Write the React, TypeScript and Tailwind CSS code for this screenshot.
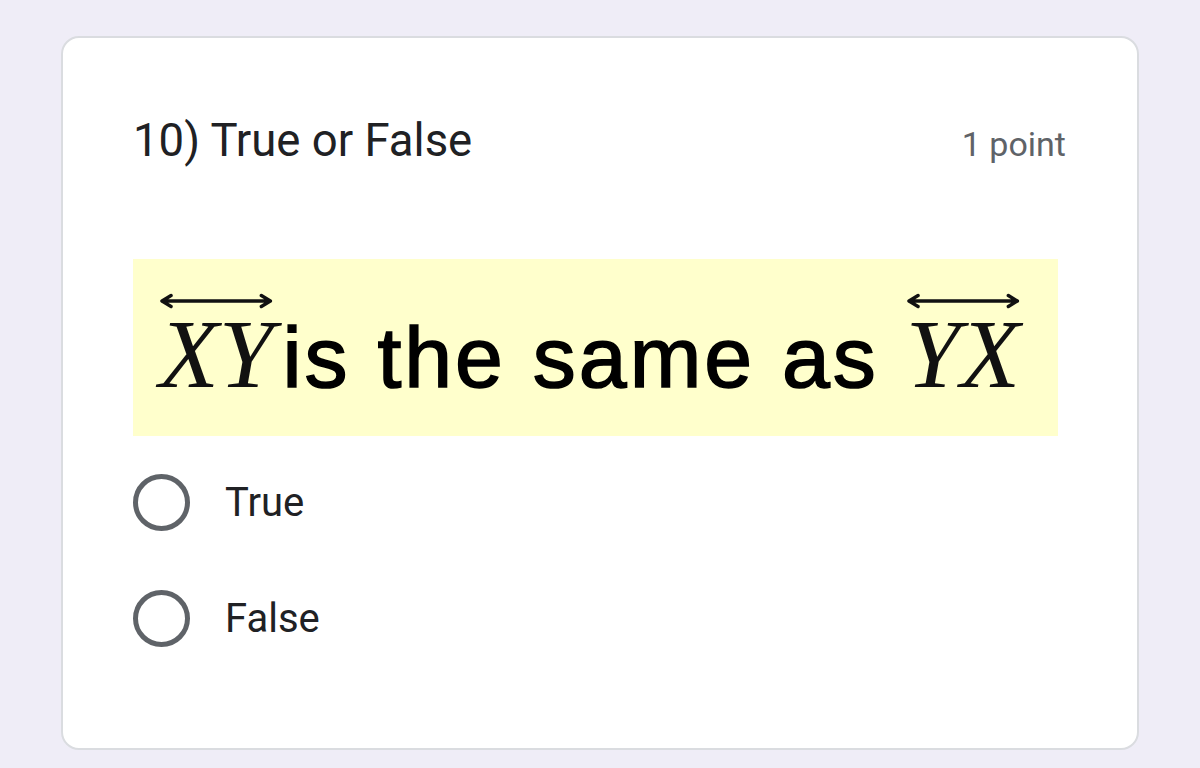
import React from "react";

const OverArrow = () => (
  <svg
    className="absolute left-0 top-[-13px] h-[18px] w-full"
    viewBox="0 0 114 18"
    preserveAspectRatio="none"
    fill="none"
    stroke="#111"
    strokeWidth={3.4}
    strokeLinecap="round"
    strokeLinejoin="round"
  >
    <path d="M3 9 H111 M3 9 L12 3.5 M3 9 L12 14.5 M111 9 L102 3.5 M111 9 L102 14.5" />
  </svg>
);

const Segment = ({ text }: { text: string }) => (
  <span className="relative inline-block font-['Liberation_Serif',serif] text-[98px] italic leading-none text-[#111]">
    <OverArrow />
    {text}
  </span>
);

const Option = ({ label }: { label: string }) => (
  <label className="flex items-center gap-[35px]">
    <span className="h-[57px] w-[57px] shrink-0 rounded-full border-[5px] border-[#5f6368]" />
    <span className="text-[40px] leading-none text-[#202124]">{label}</span>
  </label>
);

export default function App() {
  return (
    <div className="min-h-screen bg-[#efedf7] px-[61px] pt-[36px] font-['Roboto',sans-serif]">
      <div className="h-[714px] rounded-[18px] border-2 border-[#dadce0] bg-white pl-[70px] pr-[71px] pt-[75px]">

        {/* question header */}
        <div className="flex items-baseline justify-between">
          <h2 className="text-[45.5px] font-normal leading-[56px] text-[#202124]">10) True or False</h2>
          <span className="text-[34px] text-[#5f6368]">1 point</span>
        </div>

        {/* question image */}
        <div className="mt-[89px] flex h-[177px] w-[925px] items-baseline bg-[#ffffcc] pl-[26px] pt-[46px]">
          <Segment text="XY" />
          <span className="ml-[9px] font-['Liberation_Sans',sans-serif] text-[86px] leading-none tracking-[3px] text-black [-webkit-text-stroke:1.6px_black]">
            is the same as
          </span>
          <span className="ml-[27px]">
            <Segment text="YX" />
          </span>
        </div>

        {/* answers */}
        <div className="mt-[38px] flex flex-col gap-[59px]">
          <Option label="True" />
          <Option label="False" />
        </div>
      </div>
    </div>
  );
}
